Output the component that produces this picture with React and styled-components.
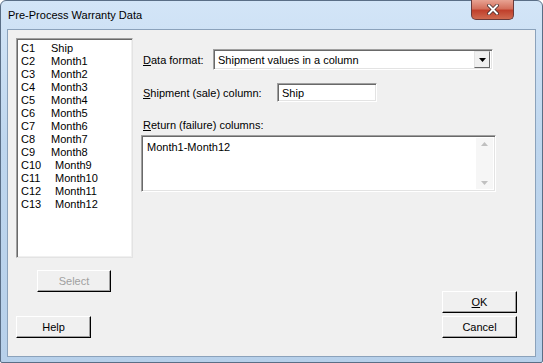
import React from "react";
import styled, { createGlobalStyle } from "styled-components";

const Global = createGlobalStyle`
  html, body { margin: 0; padding: 0; background: #ffffff; }
  body { font-family: "Liberation Sans", Arial, sans-serif; font-size: 11px; color: #000; }
  * { box-sizing: border-box; }
`;

const Window = styled.div`
  width: 543px;
  height: 363px;
  display: flex;
  flex-direction: column;
  padding: 0 6px 5px 6px;
  border: 1px solid #5a6e86;
  border-radius: 6px 6px 2px 2px;
  background: linear-gradient(180deg, #d3e5f7 0%, #bed6ee 40%, #b7d0ea 100%);
  position: relative;
`;

const TitleBar = styled.div`
  height: 28px;
  display: flex;
  align-items: center;
  padding-left: 1px;
  font-size: 11px;
  color: #000;
`;

const CloseButton = styled.div`
  position: absolute;
  top: -1px;
  right: 28px;
  width: 43px;
  height: 20px;
  border: 1px solid #6a3a3a;
  border-top: none;
  border-radius: 0 0 5px 5px;
  background: linear-gradient(180deg, #e8a393 0%, #d4705c 45%, #c0402c 55%, #cf6a50 100%);
  display: flex;
  align-items: center;
  justify-content: center;
`;

const Client = styled.div`
  flex: 1;
  display: flex;
  gap: 8px;
  background: #f0f0f0;
  border: 1px solid #8ba2bb;
  padding: 8px 18px 18px 8px;
`;

const LeftCol = styled.div`
  width: 117px;
  display: flex;
  flex-direction: column;
`;

const ListBox = styled.div`
  height: 220px;
  background: #fff;
  border: 1px solid #a0a0a0;
  border-right-color: #e3e3e3;
  border-bottom-color: #e3e3e3;
  box-shadow: inset 1px 1px 0 #696969, inset -1px -1px 0 #f0f0f0;
  padding: 3px 0 0 4px;
`;

const ListRow = styled.div`
  display: flex;
  height: 13px;
  line-height: 13px;
  white-space: nowrap;
`;

const ColNum = styled.span`
  width: ${(p) => (p.$wide ? "34px" : "30px")};
  flex: none;
`;

const Button = styled.div`
  width: ${(p) => p.$w || 75}px;
  height: 22px;
  margin-left: ${(p) => p.$ml || 0}px;
  display: flex;
  align-items: center;
  justify-content: center;
  background: #f0f0f0;
  border: 1px solid #ffffff;
  border-right-color: #000;
  border-bottom-color: #000;
  box-shadow: inset -1px -1px 0 #a0a0a0;
  color: ${(p) => (p.$disabled ? "#a0a0a0" : "#000")};
`;

const Spacer = styled.div`
  flex: 1;
`;

const RightCol = styled.div`
  flex: 1;
  display: flex;
  flex-direction: column;
`;

const FieldRow = styled.div`
  display: flex;
  align-items: center;
  height: ${(p) => p.$h}px;
  margin-top: ${(p) => p.$mt || 0}px;
  padding-left: 2px;
`;

const Label = styled.span`
  width: ${(p) => (p.$w ? `${p.$w}px` : "auto")};
  flex: none;
  white-space: nowrap;
`;

const U = styled.span`
  text-decoration: underline;
`;

const Combo = styled.div`
  width: 280px;
  height: 21px;
  display: flex;
  align-items: center;
  background: #fff;
  border: 1px solid #a0a0a0;
  border-right-color: #fff;
  border-bottom-color: #fff;
  box-shadow: inset 1px 1px 0 #696969, inset -1px -1px 0 #e3e3e3;
  padding-left: 4px;
`;

const ComboText = styled.span`
  flex: 1;
`;

const ArrowBtn = styled.div`
  width: 16px;
  height: 17px;
  margin-right: 2px;
  display: flex;
  align-items: center;
  justify-content: center;
  background: #f0f0f0;
  border: 1px solid #e3e3e3;
  border-right-color: #696969;
  border-bottom-color: #696969;
`;

const TextBox = styled.div`
  width: 100px;
  height: 19px;
  display: flex;
  align-items: center;
  background: #fff;
  border: 1px solid #a0a0a0;
  border-right-color: #fff;
  border-bottom-color: #fff;
  box-shadow: inset 1px 1px 0 #696969, inset -1px -1px 0 #e3e3e3;
  padding-left: 4px;
`;

const TextArea = styled.div`
  width: 355px;
  height: 57px;
  display: flex;
  background: #fff;
  border: 1px solid #a0a0a0;
  border-right-color: #fff;
  border-bottom-color: #fff;
  box-shadow: inset 1px 1px 0 #696969, inset -1px -1px 0 #e3e3e3;
`;

const AreaText = styled.div`
  flex: 1;
  padding: 5px 0 0 5px;
  line-height: 13px;
`;

const ScrollBar = styled.div`
  width: 17px;
  margin: 2px 2px 2px 0;
  display: flex;
  flex-direction: column;
  justify-content: space-between;
  align-items: center;
  padding: 4px 0;
  background: #f6f6f6;
`;

const ButtonStack = styled.div`
  display: flex;
  flex-direction: column;
  align-items: flex-end;
  gap: 3px;
`;

const cols = [
  ["C1", "Ship"],
  ["C2", "Month1"],
  ["C3", "Month2"],
  ["C4", "Month3"],
  ["C5", "Month4"],
  ["C6", "Month5"],
  ["C7", "Month6"],
  ["C8", "Month7"],
  ["C9", "Month8"],
  ["C10", "Month9"],
  ["C11", "Month10"],
  ["C12", "Month11"],
  ["C13", "Month12"],
];

export default function App() {
  return (
    <>
      <Global />
      <Window>
        <TitleBar>Pre-Process Warranty Data</TitleBar>
        <CloseButton>
          <svg width="12" height="11" viewBox="0 0 12 11">
            <path d="M2 1.5 L10 9.5 M10 1.5 L2 9.5" stroke="#3a2020" strokeWidth="3.4" strokeLinecap="square" />
            <path d="M2 1.5 L10 9.5 M10 1.5 L2 9.5" stroke="#ffffff" strokeWidth="2" strokeLinecap="square" />
          </svg>
        </CloseButton>
        <Client>
          <LeftCol>
            <ListBox>
              {cols.map(([c, n]) => (
                <ListRow key={c}>
                  <ColNum $wide={c.length > 2}>{c}</ColNum>
                  <span>{n}</span>
                </ListRow>
              ))}
            </ListBox>
            <Button $w={74} $ml={21} $disabled style={{ marginTop: 12 }}>Select</Button>
            <Spacer />
            <Button $w={75}>Help</Button>
          </LeftCol>
          <RightCol>
            <FieldRow $h={21} $mt={11}>
              <Label $w={70}><U>D</U>ata format:</Label>
              <Combo>
                <ComboText>Shipment values in a column</ComboText>
                <ArrowBtn>
                  <svg width="7" height="4" viewBox="0 0 7 4">
                    <path d="M0 0 H7 L3.5 4 Z" fill="#000" />
                  </svg>
                </ArrowBtn>
              </Combo>
            </FieldRow>
            <FieldRow $h={19} $mt={13}>
              <Label $w={134}><U>S</U>hipment (sale) column:</Label>
              <TextBox>Ship</TextBox>
            </FieldRow>
            <FieldRow $h={20} $mt={13}>
              <Label><U>R</U>eturn (failure) columns:</Label>
            </FieldRow>
            <TextArea>
              <AreaText>Month1-Month12</AreaText>
              <ScrollBar>
                <svg width="7" height="4" viewBox="0 0 7 4">
                  <path d="M0 4 L3.5 0 L7 4 Z" fill="#c0c0c0" />
                </svg>
                <svg width="7" height="4" viewBox="0 0 7 4">
                  <path d="M0 0 H7 L3.5 4 Z" fill="#c0c0c0" />
                </svg>
              </ScrollBar>
            </TextArea>
            <Spacer />
            <ButtonStack>
              <Button $w={75}><U>O</U>K</Button>
              <Button $w={75}>Cancel</Button>
            </ButtonStack>
          </RightCol>
        </Client>
      </Window>
    </>
  );
}
